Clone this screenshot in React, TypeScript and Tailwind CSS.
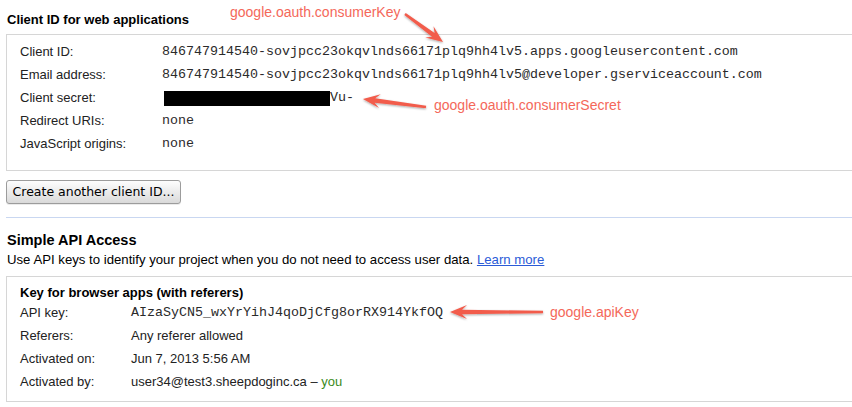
import * as React from 'react';

type Pt = [number, number];

// skitch-style arrow: thin tail, wider neck, notched head
const arrowPoints = (tail: Pt, tip: Pt) => {
  const dx = tip[0] - tail[0];
  const dy = tip[1] - tail[1];
  const len = Math.hypot(dx, dy);
  const ux = dx / len;
  const uy = dy / len;
  const nx = -uy;
  const ny = ux;
  const at = (back: number, side: number): string =>
    `${(tip[0] - ux * back + nx * side).toFixed(1)},${(tip[1] - uy * back + ny * side).toFixed(1)}`;
  return [
    at(len, 1.2),
    at(12, 2.2),
    at(17, 7),
    at(0, 0),
    at(17, -7),
    at(12, -2.2),
    at(len, -1.2),
  ].join(' ');
};

const arrows: { tail: Pt; tip: Pt }[] = [
  { tail: [405, 14], tip: [443, 42] },
  { tail: [426, 107], tip: [363, 99] },
  { tail: [543, 312], tip: [450, 312] },
];

const Annotations: React.FC = () => (
  <div className="pointer-events-none absolute inset-0">
    <svg width="852" height="407" className="absolute left-0 top-0">
      <defs>
        <filter id="shadow" x="-20%" y="-50%" width="140%" height="200%">
          <feDropShadow dx="0" dy="1" stdDeviation="1" floodColor="#000" floodOpacity="0.35" />
        </filter>
      </defs>
      {arrows.map((a, i) => (
        <polygon key={i} points={arrowPoints(a.tail, a.tip)} fill="#f25c4c" filter="url(#shadow)" />
      ))}
    </svg>
    <span className="absolute left-[230px] top-[4px] text-[14px] leading-[16px] text-[#f4685a]">
      google.oauth.consumerKey
    </span>
    <span className="absolute left-[434px] top-[97px] text-[14px] leading-[16px] text-[#f4685a]">
      google.oauth.consumerSecret
    </span>
    <span className="absolute left-[550px] top-[304px] text-[14px] leading-[16px] text-[#f4685a]">
      google.apiKey
    </span>
  </div>
);

const Mono: React.FC<{ children: React.ReactNode }> = ({ children }) => (
  <span className="font-['Liberation_Mono','Courier_New',monospace] text-[13.33px] text-[#2a2a2a]">{children}</span>
);

const Row: React.FC<{ label: string; labelWidth: string; children: React.ReactNode }> = ({
  label,
  labelWidth,
  children,
}) => (
  <div className="flex h-[23px] items-center whitespace-nowrap">
    <div className={`${labelWidth} shrink-0`}>{label}</div>
    <div>{children}</div>
  </div>
);

export default function App() {
  return (
    <div className="relative h-[407px] w-[852px] overflow-hidden bg-white font-['Liberation_Sans',Arial,sans-serif] text-[13px] leading-[16px] text-[#222]">
      <div className="w-[920px] pl-[6px]">
        <h3 className="pl-[1px] pt-[12px] text-[13px] font-bold leading-[16px] text-black">
          Client ID for web applications
        </h3>

        <div className="mt-[6px] border border-[#d6d6d6] pb-[15px] pl-[13px] pt-[5px]">
          <Row label="Client ID:" labelWidth="w-[142px]">
            <Mono>846747914540-sovjpcc23okqvlnds66171plq9hh4lv5.apps.googleusercontent.com</Mono>
          </Row>
          <Row label="Email address:" labelWidth="w-[142px]">
            <Mono>846747914540-sovjpcc23okqvlnds66171plq9hh4lv5@developer.gserviceaccount.com</Mono>
          </Row>
          <Row label="Client secret:" labelWidth="w-[142px]">
            <span className="flex items-center">
              <span className="ml-[2px] mt-[2px] inline-block h-[15px] w-[166px] bg-black" />
              <Mono>Vu-</Mono>
            </span>
          </Row>
          <Row label="Redirect URIs:" labelWidth="w-[142px]">
            <Mono>none</Mono>
          </Row>
          <Row label="JavaScript origins:" labelWidth="w-[142px]">
            <Mono>none</Mono>
          </Row>
        </div>

        <button className="mt-[9px] flex h-[24px] w-[175px] items-center justify-center rounded-[3px] border border-[#9c9c9c] bg-gradient-to-b from-[#fdfdfd] to-[#dadada] font-['DejaVu_Sans',sans-serif] text-[12.5px] text-black shadow-[0_1px_0_rgba(0,0,0,0.08)]">
          Create another client ID...
        </button>

        <div className="mt-[13px] border-t border-[#c9d7f1]" />

        <h2 className="pl-[1px] pt-[13px] text-[14.5px] font-bold leading-[18px] text-black">Simple API Access</h2>
        <p className="mt-[3px] pl-[1px] text-[13.2px] text-black">
          Use API keys to identify your project when you do not need to access user data.{' '}
          <a href="#" className="text-[#2a5bd7] underline">
            Learn more
          </a>
        </p>

        <div className="mt-[8px] border border-[#d6d6d6] pb-[8px] pl-[13px] pt-[7px]">
          <h4 className="text-[13px] font-bold leading-[17px] text-black">Key for browser apps (with referers)</h4>
          <Row label="API key:" labelWidth="w-[111px]">
            <Mono>AIzaSyCN5_wxYrYihJ4qoDjCfg8orRX914YkfOQ</Mono>
          </Row>
          <Row label="Referers:" labelWidth="w-[111px]">
            Any referer allowed
          </Row>
          <Row label="Activated on:" labelWidth="w-[111px]">
            Jun 7, 2013 5:56 AM
          </Row>
          <Row label="Activated by:" labelWidth="w-[111px]">
            user34@test3.sheepdoginc.ca – <span className="text-[#3a8a1c]">you</span>
          </Row>
        </div>
      </div>

      <Annotations />
    </div>
  );
}
